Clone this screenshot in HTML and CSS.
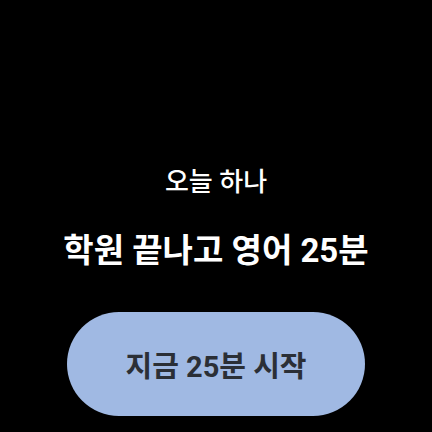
FILE: index.html
```html
<!DOCTYPE html>
<html>
<head>
    <title>오늘 하나</title>
    <link rel="stylesheet" href="styles.css">
</head>
<body>
    <div class="screen">
        <div class="label">오늘 하나</div>
        <div class="task">학원 끝나고 영어 25분</div>
        <button class="start">지금 25분 시작</button>
    </div>
</body>
</html>
```

FILE: styles.css
```css
:root {
    --background: #000000;
    --foreground: #ffffff;
    --primary: #a0b9e3;
    --on-primary: #2b2f36;
}

html, body {
    margin: 0;
    padding: 0;
}

body {
    background-color: var(--background);
    font-family: Roboto, "Noto Sans CJK KR", sans-serif;
    color: var(--foreground);
}

.screen {
    width: 432px;
    height: 432px;
    display: flex;
    flex-direction: column;
    align-items: center;
    padding-top: 167px;
    box-sizing: border-box;
}

.label {
    font-size: 26px;
    line-height: 30px;
    font-weight: 500;
}

.task {
    margin-top: 34px;
    font-size: 33px;
    line-height: 40px;
    font-weight: 700;
}

.start {
    margin-top: 41px;
    width: 298px;
    height: 104px;
    border: none;
    border-radius: 52px;
    background-color: var(--primary);
    color: var(--on-primary);
    font-family: inherit;
    font-size: 29px;
    font-weight: 700;
    padding: 0;
}
```
